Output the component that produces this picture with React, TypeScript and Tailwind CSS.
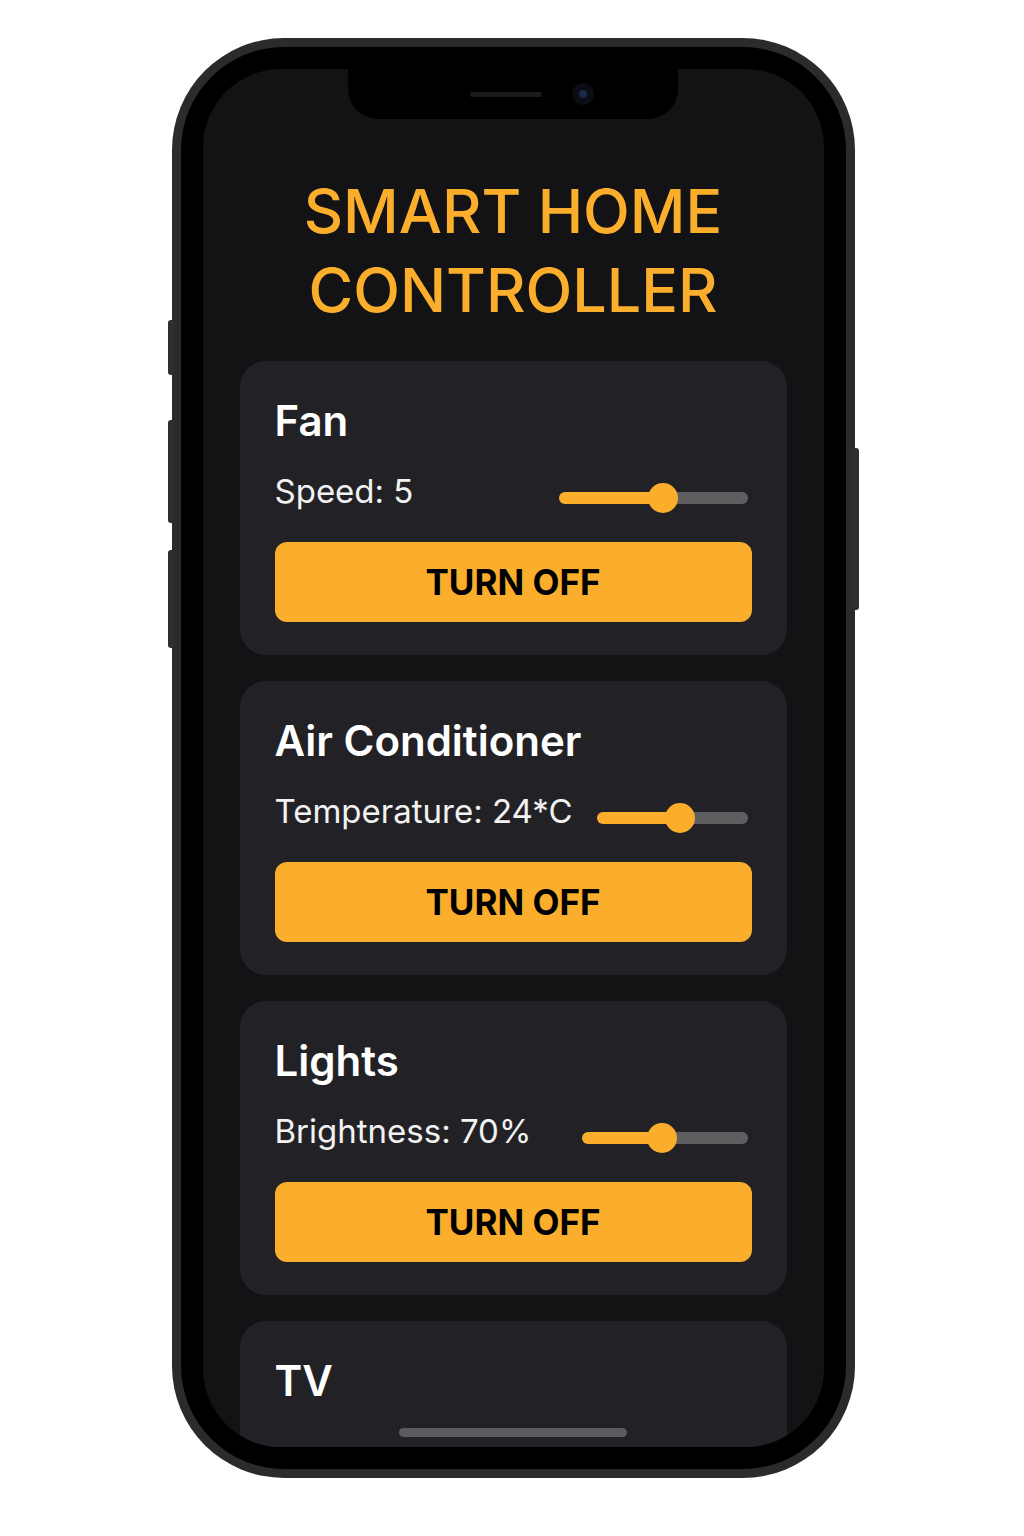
import { useState } from 'react';

type Device = {
  name: string;
  label?: string;
  sliderWidth?: number;
  fill?: number;
};

const devices: Device[] = [
  { name: 'Fan', label: 'Speed: 5', sliderWidth: 189, fill: 104 },
  { name: 'Air Conditioner', label: 'Temperature: 24*C', sliderWidth: 151, fill: 83 },
  { name: 'Lights', label: 'Brightness: 70%', sliderWidth: 166, fill: 80 },
  { name: 'TV' },
];

function Slider({ width, fill }: { width: number; fill: number }) {
  return (
    <div className="mt-[14px] mr-1 flex items-center" style={{ width }}>
      <div className="h-[12px] rounded-l-full bg-[#fbae2c]" style={{ width: fill }} />
      <div className="relative z-10 -mx-[15px] h-[30px] w-[30px] shrink-0 rounded-full bg-[#fbae2c]" />
      <div className="h-[12px] flex-1 rounded-r-full bg-[#5f5f61]" />
    </div>
  );
}

function DeviceCard({ device }: { device: Device }) {
  const [on, setOn] = useState(true);
  return (
    <div className="shrink-0 rounded-[26px] bg-[#222226] px-[35px] pt-[36px] pb-[33px]">
      <h2 className="text-[42px] leading-[48px] font-semibold text-white">{device.name}</h2>
      {device.label ? (
        <>
          <div className="mt-[26px] flex h-[40px] items-center justify-between">
            <span className="text-[33px] leading-[40px] text-[#f2f2f2]">{device.label}</span>
            <Slider width={device.sliderWidth!} fill={device.fill!} />
          </div>
          <button
            onClick={() => setOn(!on)}
            className="mt-[31px] flex h-[80px] w-full items-center justify-center rounded-[12px] bg-[#fbae2c] text-[35px] font-bold text-black"
          >
            {on ? 'TURN OFF' : 'TURN ON'}
          </button>
        </>
      ) : (
        <div className="h-[120px]" />
      )}
    </div>
  );
}

export default function App() {
  return (
    <div
      className="flex h-[1536px] w-full justify-center bg-white pt-[38px]"
      style={{ fontFamily: 'Inter, "Noto Sans", sans-serif' }}
    >
      <div className="relative ml-[2px] h-[1440px] w-[683px]">
        {/* side buttons */}
        <div className="absolute left-[-4px] top-[282px] h-[55px] w-[6px] rounded-l-[3px] bg-[#2e2e2e]" />
        <div className="absolute left-[-4px] top-[382px] h-[103px] w-[6px] rounded-l-[3px] bg-[#2e2e2e]" />
        <div className="absolute left-[-4px] top-[512px] h-[98px] w-[6px] rounded-l-[3px] bg-[#2e2e2e]" />
        <div className="absolute right-[-4px] top-[410px] h-[162px] w-[6px] rounded-r-[3px] bg-[#2e2e2e]" />

        <div className="h-full w-full rounded-[112px] bg-[#2b2b2c] p-[9px]">
          <div className="h-full w-full rounded-[103px] bg-black p-[22px]">
            <div className="relative flex h-full w-full flex-col overflow-hidden rounded-[78px] bg-[#131316]">
              {/* notch */}
              <div className="absolute left-1/2 top-0 flex h-[50px] w-[330px] -translate-x-1/2 items-center justify-center gap-[30px] rounded-b-[30px] bg-black pl-[38px]">
                <div className="h-[5px] w-[72px] rounded-full bg-[#1c1c1e]" />
                <div className="flex h-[22px] w-[22px] items-center justify-center rounded-full bg-[#0b0d14]">
                  <div className="h-[8px] w-[8px] rounded-full bg-[#1a2a4a]" />
                </div>
              </div>

              <h1 className="mt-[103px] text-center text-[61px] leading-[79px] font-medium text-[#fbae2c]">
                SMART HOME
                <br />
                CONTROLLER
              </h1>

              <div className="mt-[31px] flex flex-col gap-[26px] px-[37px]">
                {devices.map((d) => (
                  <DeviceCard key={d.name} device={d} />
                ))}
              </div>

              {/* home indicator */}
              <div className="absolute bottom-[10px] left-1/2 h-[9px] w-[228px] -translate-x-1/2 rounded-full bg-[#5c5c5e]" />
            </div>
          </div>
        </div>
      </div>
    </div>
  );
}
